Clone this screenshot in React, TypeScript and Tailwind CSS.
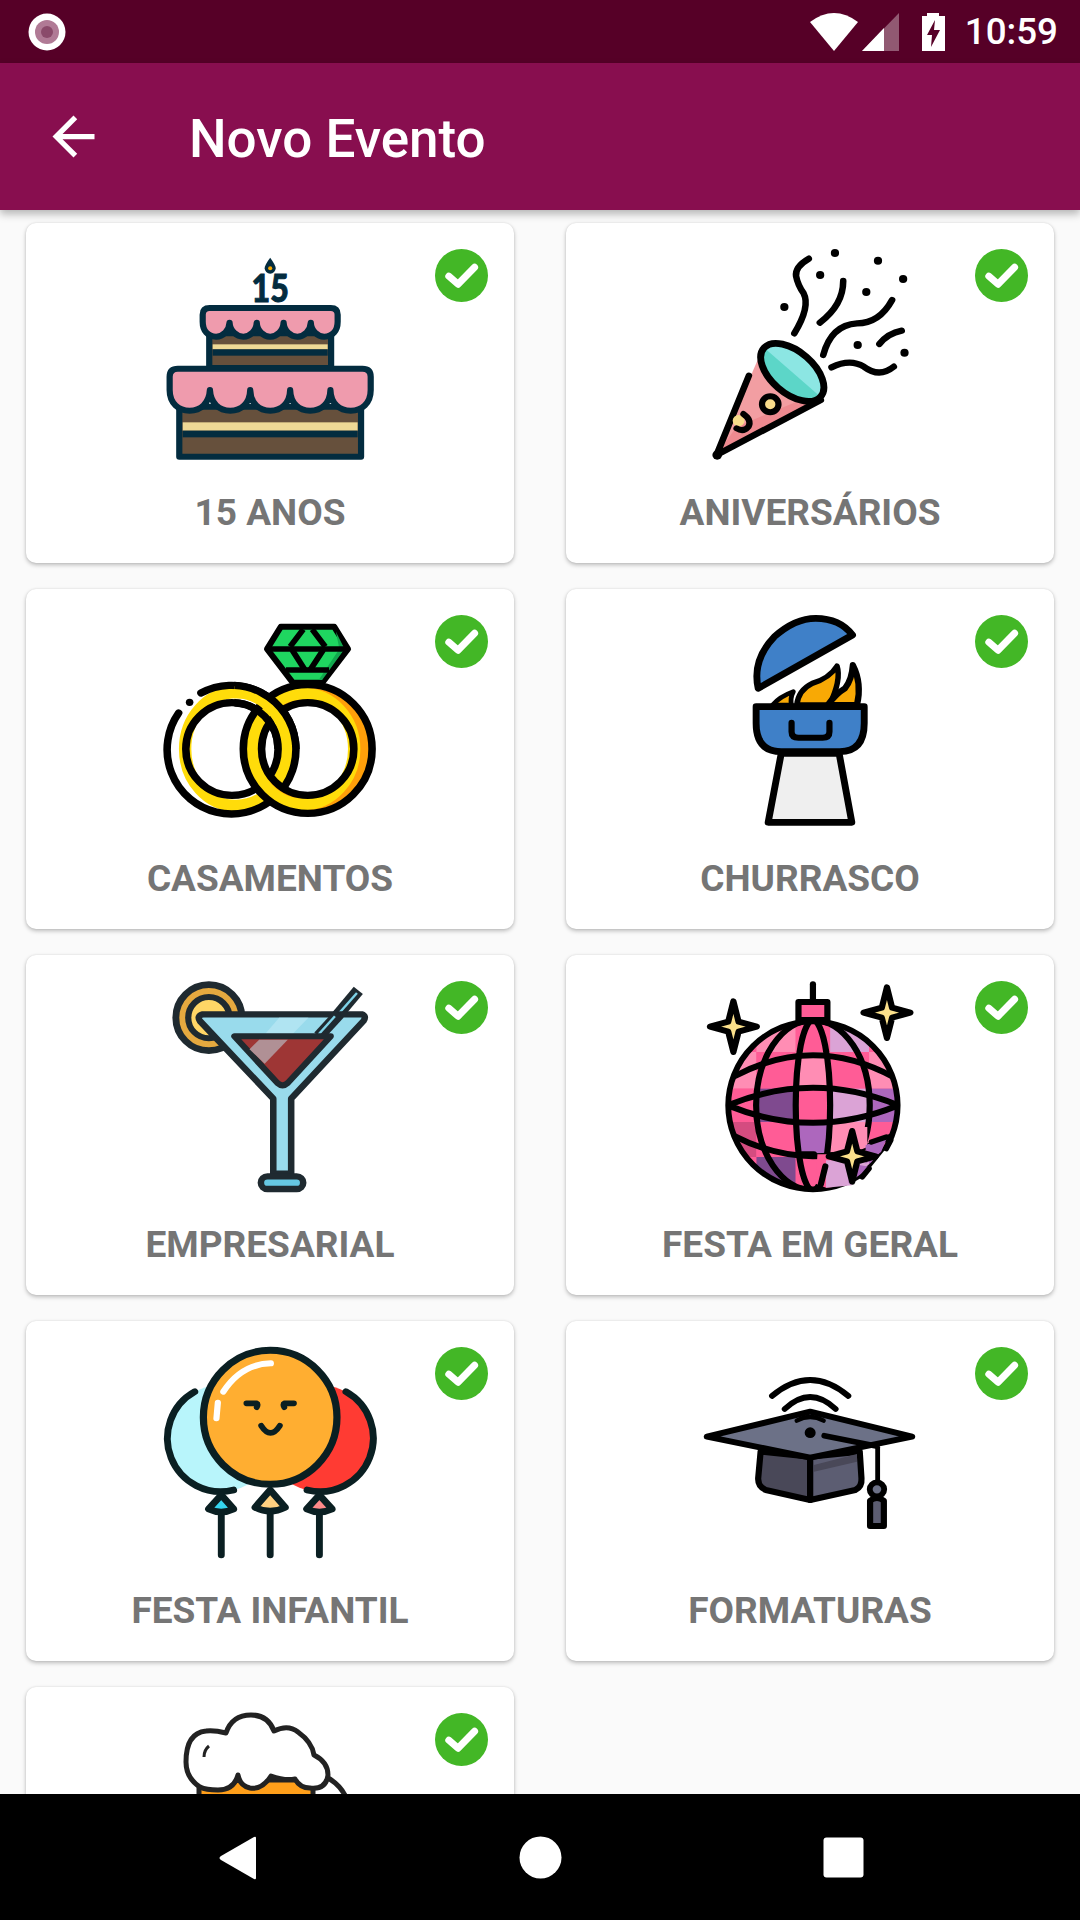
import type { ReactNode } from 'react'

// icon drawings use the coords of the reference crops (2.9 units per px across, 3 down),
// so round things are ellipses with ry a bit over rx
const INK = '#032c3f'

function Cake() {
    return (
        <svg viewBox="464 99 639 660" preserveAspectRatio="none" className="w-[220px] h-[220px]">
            <g stroke={INK} strokeWidth="18" strokeLinejoin="round">
                <rect x="607" y="370" width="354" height="104" fill="#66503c" />
                <rect x="617" y="403" width="334" height="15" fill="#efd996" stroke="none" />
                <rect x="617" y="418" width="334" height="19" fill={INK} stroke="none" />
                <path d="M588 314Q588 294 608 294H960Q980 294 980 314V335C980 362 965 380 941 380C921 380 903 362 902 338C901 362 883 380 863 380C843 380 824 362 823 338C822 362 804 380 784 380C764 380 746 362 745 338C744 362 726 380 706 380C686 380 667 362 666 338C665 362 647 380 627 380C603 380 588 362 588 335Z" fill="#ef9bad" />
                <rect x="520" y="590" width="528" height="150" fill="#66503c" />
                <rect x="530" y="637" width="508" height="25" fill="#efd996" stroke="none" />
                <rect x="530" y="662" width="508" height="20" fill={INK} stroke="none" />
                <path d="M492 500Q492 476 516 476H1052Q1076 476 1076 500V540C1076 580 1050 602 1018 602C985 602 960 580 959 540C958 580 933 602 900 602C868 602 843 580 842 540C841 580 816 602 784 602C752 602 727 580 726 540C725 580 700 602 668 602C636 602 611 580 609 540C607 580 582 602 550 602C518 602 492 580 492 540Z" fill="#ef9bad" />
            </g>
            <text x="784" y="276" textAnchor="middle" fontFamily="Lato" fontWeight="900" fontSize="112" fill={INK} stroke={INK} strokeWidth="3" textLength="108" lengthAdjust="spacingAndGlyphs">15</text>
            <path d="M784 143Q768 165 768 175A16 16 0 0 0 800 175Q800 165 784 143Z" fill={INK} />
            <circle cx="784" cy="175" r="6" fill="#f5a800" />
        </svg>
    )
}

function Popper() {
    const dots = [[856, 129], [981, 152], [1054, 207], [813, 195], [947, 246], [709, 291], [922, 405], [1058, 428]]
    return (
        <svg viewBox="464 99 639 660" preserveAspectRatio="none" className="w-[220px] h-[220px]">
            <path d="M512 735L640 430L815 570Z" fill="#f29ea2" />
            <path d="M512 735L570 650L780 560L815 570Z" fill="#ee8a90" />
            <g transform="rotate(42 732 487)">
                <ellipse cx="732" cy="487" rx="110" ry="62" fill="#8ce6e3" />
                <path d="M622 487A110 62 0 0 0 842 487Z" fill="#5cd6c8" />
                <ellipse cx="732" cy="487" rx="110" ry="62" fill="none" stroke="#000" strokeWidth="20" />
            </g>
            <g fill="none" stroke="#000" strokeWidth="19" strokeLinecap="round" strokeLinejoin="round">
                <path d="M606 497L512 735L815 570" />
                <path d="M780 146Q740 170 743 198Q748 225 765 250Q785 290 738 370" />
                <path d="M880 213Q880 285 812 338" />
                <path d="M822 435Q845 345 920 340Q985 340 1022 270" />
                <path d="M985 402Q1010 370 1050 362" />
                <path d="M846 472Q900 445 940 470Q985 505 1027 470" />
            </g>
            <circle cx="514" cy="735" r="14" fill="#000" />
            <circle cx="668" cy="583" r="24" fill="#f8dc8a" stroke="#000" strokeWidth="18" />
            <circle cx="576" cy="632" r="17" fill="#f8dc8a" />
            <path d="M590 612Q615 630 605 650Q590 668 570 655" fill="none" stroke="#000" strokeWidth="18" strokeLinecap="round" />
            {dots.map(([x, y]) => <circle key={x} cx={x} cy={y} r="12" fill="#000" />)}
        </svg>
    )
}

function Rings() {
    const leftRing = (
        <g fill="none">
            <ellipse cx="685" cy="477" rx="148" ry="170" stroke="#ffdc0a" strokeWidth="36" />
            <ellipse cx="673" cy="477" rx="134" ry="139" stroke="#000" strokeWidth="22" />
            <path d="M583 309A187 193 0 1 1 518 369" stroke="#000" strokeWidth="22" strokeLinecap="round" />
        </g>
    )
    return (
        <svg viewBox="464 57 639 660" preserveAspectRatio="none" className="w-[220px] h-[220px]">
            <defs>
                <clipPath id="rings-top"><rect x="680" y="200" width="240" height="277" /></clipPath>
            </defs>
            {/* gem */}
            <path d="M815 110H970L1010 177L935 278H850L775 177Z" fill="#1fd660" stroke="#000" strokeWidth="18" strokeLinejoin="round" />
            <path d="M975 125L1000 177L935 270L925 270L985 177Z" fill="#12a84e" />
            <g fill="none" stroke="#000" strokeWidth="17" strokeLinejoin="round">
                <path d="M775 177H1010M830 240H955" />
                <path d="M880 118L842 170M906 118L944 170" />
                <path d="M848 180L885 240M938 180L900 240" />
            </g>
            {leftRing}
            <g fill="none">
                <ellipse cx="893" cy="477" rx="161" ry="166" stroke="#ff9f0a" strokeWidth="36" />
                <ellipse cx="880" cy="477" rx="148" ry="166" stroke="#ffdc0a" strokeWidth="36" />
                <ellipse cx="893" cy="477" rx="134" ry="139" stroke="#000" strokeWidth="22" />
                <ellipse cx="893" cy="477" rx="187" ry="193" stroke="#000" strokeWidth="22" />
            </g>
            <g clipPath="url(#rings-top)">{leftRing}</g>
            <circle cx="550" cy="337" r="11" fill="#000" />
        </svg>
    )
}

function Grill() {
    return (
        <svg viewBox="464 57 639 660" preserveAspectRatio="none" className="w-[220px] h-[220px]">
            <g stroke="#000" strokeWidth="20" strokeLinejoin="round">
                <path d="M633 295Q615 210 680 140Q740 85 800 85Q870 85 907 135Z" fill="#3f80c8" />
                <path d="M675 345Q695 320 735 305Q725 325 730 345Z" fill="#f8a905" strokeWidth="14" />
                <path d="M745 345Q750 300 790 280Q840 265 862 228Q875 270 840 345Z" fill="#f8a905" strokeWidth="16" />
                <path d="M835 345Q860 310 885 295Q905 270 908 225Q935 280 920 345Z" fill="#f8a905" strokeWidth="18" />
                <path d="M700 490L662 697H905L868 490Z" fill="#efefef" />
                <path d="M627 350H941V400Q941 485 870 485H700Q627 485 627 400Z" fill="#3f80c8" />
                <path d="M730 398V425Q730 443 750 443H820Q840 443 840 425V398" fill="none" strokeWidth="18" strokeLinecap="round" />
            </g>
        </svg>
    )
}

function Cocktail() {
    const line = '#1f2a30'
    return (
        <svg viewBox="464 74 639 660" preserveAspectRatio="none" className="w-[220px] h-[220px]">
            <ellipse cx="606" cy="202" rx="96" ry="99" fill="#e5a93f" stroke={line} strokeWidth="20" />
            <ellipse cx="606" cy="202" rx="60" ry="62" fill="#ffd666" stroke={line} strokeWidth="18" />
            <path d="M925 262L1040 120" stroke={line} strokeWidth="34" />
            <path d="M925 258L1036 128" stroke="#7fd3e8" strokeWidth="7" />
            <path d="M588 192H1050Q1065 197 1055 212L845 445V670H793V445L580 212Q570 197 588 192Z" fill="#99dbec" stroke={line} strokeWidth="19" strokeLinejoin="round" />
            <path d="M810 202H895L850 250H770Z" fill="#b0e4f2" />
            <path d="M925 258L985 190" stroke={line} strokeWidth="34" />
            <path d="M925 252L972 198" stroke="#7fd3e8" strokeWidth="7" />
            <path d="M680 258H960L835 398Q820 412 805 398Z" fill="#9e3635" stroke={line} strokeWidth="18" strokeLinejoin="round" />
            <path d="M752 268H835L768 340L724 297Z" fill="#b09095" />
            <rect x="757" y="678" width="123" height="38" rx="19" fill="#66c8e3" stroke={line} strokeWidth="19" />
        </svg>
    )
}

const P = '#ff5c96'
const L = '#ff8db4'
const V = '#dba3d6'
const D = '#7f4a8f'
const M = '#ad67bd'
const DISCO_CELLS = [
    [P, L, P, V, P],
    [L, P, L, P, L],
    [P, D, P, V, M],
    ['#d44c80', P, M, L, P],
    [P, D, P, V, M],
]
const DISCO_X = [530, 628, 742, 842, 955, 1060]
const DISCO_Y = [200, 305, 415, 515, 620, 730]

function star(cx: number, cy: number) {
    const w = 15
    return `M${cx} ${cy - 76}L${cx + w} ${cy - w}L${cx + 68} ${cy}L${cx + w} ${cy + w}L${cx} ${cy + 76}L${cx - w} ${cy + w}L${cx - 68} ${cy}L${cx - w} ${cy - w}Z`
}

function Disco() {
    return (
        <svg viewBox="464 74 639 660" preserveAspectRatio="none" className="w-[220px] h-[220px]">
            <defs>
                <clipPath id="disco-ball"><ellipse cx="792" cy="465" rx="246" ry="252" /></clipPath>
            </defs>
            <path d="M792 102V150" stroke="#000" strokeWidth="18" strokeLinecap="round" />
            <rect x="750" y="155" width="84" height="54" fill={P} stroke="#000" strokeWidth="18" strokeLinejoin="round" />
            <ellipse cx="792" cy="465" rx="246" ry="252" fill={P} />
            <g clipPath="url(#disco-ball)">
                {DISCO_CELLS.map((row, r) => row.map((c, i) => (
                    <rect key={`${r}-${i}`} x={DISCO_X[i]} y={DISCO_Y[r]} width={DISCO_X[i + 1] - DISCO_X[i]} height={DISCO_Y[r + 1] - DISCO_Y[r]} fill={c} />
                )))}
                <g fill="none" stroke="#000" strokeWidth="18">
                    <ellipse cx="792" cy="465" rx="50" ry="255" />
                    <ellipse cx="792" cy="465" rx="165" ry="255" />
                    <path d="M545 465Q792 360 1040 465Q792 570 545 465Z" />
                    <path d="M560 380Q792 250 1025 380" />
                    <path d="M560 555Q792 680 1025 555" />
                </g>
            </g>
            <ellipse cx="792" cy="465" rx="246" ry="252" fill="none" stroke="#000" strokeWidth="17" />
            {/* the lower star cuts the grid and the ball outline */}
            <path d="M1012 585L1060 600L1000 740L925 725L945 670Z" fill="#fff" />
            <path d="M850 530H950V590L880 620H850Z" fill={L} />
            <path d="M945 585L1010 555L990 605L945 640Z" fill={M} />
            <path d="M805 612H850V710L830 712L800 700Z" fill={P} />
            <path d="M830 630H905V705L830 712Z" fill={V} />
            <path d="M905 640L960 650L895 698Z" fill={M} />
            <path d="M962 575L1005 560M935 680L955 655M1005 595L1018 570" stroke="#000" strokeWidth="16" strokeLinecap="round" />
            <path d="M760 612H795M828 648L815 702" fill="none" stroke="#000" strokeWidth="18" strokeLinecap="round" />
            {[[561, 229], [1007, 187], [906, 618]].map(([x, y]) => (
                <path key={x} d={star(x, y)} fill="#fbe08b" stroke="#000" strokeWidth="18" strokeLinejoin="round" />
            ))}
        </svg>
    )
}

function Balloons() {
    const line = '#0a1f22'
    return (
        <svg viewBox="464 93 639 660" preserveAspectRatio="none" className="w-[220px] h-[220px]">
            <ellipse cx="642" cy="385" rx="155" ry="160" fill="#b8f5fb" />
            <ellipse cx="927" cy="385" rx="155" ry="160" fill="#ff3b33" />
            <g fill="none" stroke={line} strokeWidth="20" strokeLinecap="round" strokeLinejoin="round">
                <path d="M565 245A155 160 0 0 0 678 540" />
                <path d="M1004 245A155 160 0 0 1 891 540" />
                <ellipse cx="784" cy="322" rx="194" ry="201" fill="#ffae31" strokeWidth="21" />
                <path d="M642 612V735M784 612V735M927 612V735" />
                <path d="M642 555L605 597Q642 615 678 597Z" fill="#35d6f0" />
                <path d="M784 540L740 592Q784 615 828 592Z" fill="#ffd180" />
                <path d="M927 555L890 597Q927 615 964 597Z" fill="#ff8a8a" />
                <path d="M715 280H745Q750 282 745 292M853 280H825Q820 282 825 292" strokeWidth="17" />
                <path d="M758 347Q785 390 812 347" strokeWidth="17" />
            </g>
            <path d="M786 160Q700 162 648 245M632 278L628 325" fill="none" stroke="#fff" strokeWidth="18" strokeLinecap="round" />
        </svg>
    )
}

function GradCap() {
    return (
        <svg viewBox="464 93 639 660" preserveAspectRatio="none" className="w-[220px] h-[220px]">
            <g stroke="#000" strokeWidth="18" strokeLinejoin="round" strokeLinecap="round">
                <path d="M640 425L633 505Q632 530 655 540L784 570V440Z" fill="#494858" />
                <path d="M928 425L933 505Q935 530 915 540L784 570V440Z" fill="#5c5d72" />
                <path d="M795 465L920 432V455L795 485Z" fill="#494858" stroke="none" />
                <path d="M784 305L1080 380L784 443L484 380Z" fill="#6c7187" />
                <path d="M673 258Q784 162 895 258M710 297Q784 225 858 297" fill="none" strokeWidth="17" />
                <path d="M745 332Q784 310 823 332" fill="none" strokeWidth="13" />
                <path d="M825 377L975 408" fill="none" strokeWidth="17" />
                <path d="M980 412V510" fill="none" strokeWidth="14" />
                <path d="M958 572Q978 555 998 572V648H958Z" fill="#5c5d72" />
                <circle cx="978" cy="538" r="21" fill="#6c7187" strokeWidth="17" />
            </g>
            <circle cx="784" cy="368" r="16" fill="#000" />
        </svg>
    )
}

// this one is cut off by the nav bar, drawn in real px
function Beer() {
    return (
        <svg viewBox="160 1707 220 220" className="w-[220px] h-[220px]">
            <rect x="199" y="1780" width="114" height="60" fill="#ff9f1a" stroke="#222" strokeWidth="5" />
            <path d="M314 1772Q340 1780 347 1800" fill="none" stroke="#222" strokeWidth="5" />
            <path d="M200 1787Q186 1778 186 1762Q186 1733 206 1731Q214 1730 226 1733Q232 1715 251 1715Q268 1715 274 1731Q288 1724 298 1732Q312 1742 314 1755Q328 1762 328 1775Q326 1790 310 1788Q300 1788 295 1779Q285 1781 271 1776Q262 1790 250 1788Q240 1786 238 1775Q234 1790 218 1790Q206 1790 200 1787Z" fill="#fff" stroke="#222" strokeWidth="5" strokeLinejoin="round" />
            <path d="M204 1757Q204 1750 209 1746" fill="none" stroke="#222" strokeWidth="3" />
        </svg>
    )
}

const EVENTS: { label?: string; icon: ReactNode }[] = [
    { label: '15 ANOS', icon: <Cake /> },
    { label: 'ANIVERSÁRIOS', icon: <Popper /> },
    { label: 'CASAMENTOS', icon: <Rings /> },
    { label: 'CHURRASCO', icon: <Grill /> },
    { label: 'EMPRESARIAL', icon: <Cocktail /> },
    { label: 'FESTA EM GERAL', icon: <Disco /> },
    { label: 'FESTA INFANTIL', icon: <Balloons /> },
    { label: 'FORMATURAS', icon: <GradCap /> },
    { icon: <Beer /> },
]

function CheckBadge() {
    return (
        <svg viewBox="0 0 53 53" className="absolute top-[26px] right-[26px] w-[53px] h-[53px]">
            <circle cx="26.5" cy="26.5" r="26.5" fill="#43b726" />
            <path d="M13.8 27.2L23 35.2L39.6 18.2" fill="none" stroke="#fff" strokeWidth="7" strokeLinecap="round" strokeLinejoin="round" />
        </svg>
    )
}

export default function App() {
    return (
        <div className="w-[1080px] h-[1920px] flex flex-col bg-[#fafafa] font-['Roboto',sans-serif] overflow-hidden">
            {/* Status bar */}
            <div className="h-[63px] shrink-0 bg-[#560027] flex items-center justify-between pl-[28px] pr-[22px]">
                <svg viewBox="0 0 38 38" className="w-[38px] h-[38px]">
                    <circle cx="19" cy="19" r="18.5" fill="#fff" />
                    <circle cx="19" cy="19" r="12" fill="#b07a95" />
                    <circle cx="19" cy="19" r="6" fill="#8a4a6a" />
                </svg>
                <div className="flex items-center">
                    <svg viewBox="0 0 48 38" className="w-[48px] h-[38px]">
                        <path d="M0 9Q24 -9 48 9L24 38Z" fill="#fff" />
                    </svg>
                    <svg viewBox="0 0 37 38" className="w-[37px] h-[38px] ml-[4px]">
                        <path d="M37 0V38H0Z" fill="#fff" fillOpacity="0.35" />
                        <path d="M22 15V38H0Z" fill="#fff" />
                    </svg>
                    <svg viewBox="0 0 23 38" className="w-[23px] h-[38px] ml-[23px]">
                        <path d="M5 0H17V3H23V38H0V3H5Z" fill="#fff" />
                        <path d="M13 7L5 22H10L9 34L18 17H12Z" fill="#560027" />
                    </svg>
                    <span className="ml-[20px] mt-[2px] text-white text-[36.75px] leading-none font-medium">10:59</span>
                </div>
            </div>

            {/* App bar */}
            <div className="h-[147px] shrink-0 relative z-10 bg-[#880e4f] flex items-center pl-[42px] shadow-[0_4px_8px_rgba(0,0,0,0.28)]">
                <svg viewBox="0 0 24 24" className="w-[63px] h-[63px]" fill="#fff">
                    <path d="M20 11H7.83l5.59-5.59L12 4l-8 8 8 8 1.41-1.41L7.83 13H20v-2z" />
                </svg>
                <h1 className="ml-[84px] mt-[5px] text-white text-[53px] leading-none font-medium">Novo Evento</h1>
            </div>

            {/* Event grid */}
            <div className="flex-1 overflow-hidden px-[26px] pt-[13px]">
                <div className="grid grid-cols-2 gap-x-[52px] gap-y-[26px]">
                    {EVENTS.map((event, i) => (
                        <div key={i} className="relative h-[340px] bg-white rounded-[10px] flex flex-col items-center pt-[20px] shadow-[0_2px_4px_rgba(0,0,0,0.25),0_0_2px_rgba(0,0,0,0.1)]">
                            {event.icon}
                            <CheckBadge />
                            {event.label && <span className="mt-[28px] text-[37px] leading-[43px] font-bold text-[#757575]">{event.label}</span>}
                        </div>
                    ))}
                </div>
            </div>

            {/* Nav bar */}
            <div className="h-[126px] shrink-0 bg-black flex items-center justify-center gap-[240px]">
                <svg viewBox="0 0 63 63" className="w-[63px] h-[63px]">
                    <path d="M50 12V52Q50 54 48 53L15 34Q12 32 15 30L48 11Q50 10 50 12Z" fill="#fff" />
                </svg>
                <svg viewBox="0 0 63 63" className="w-[63px] h-[63px]">
                    <circle cx="31.5" cy="31.5" r="21" fill="#fff" />
                </svg>
                <svg viewBox="0 0 63 63" className="w-[63px] h-[63px]">
                    <rect x="11.5" y="11.5" width="40" height="40" rx="3" fill="#fff" />
                </svg>
            </div>
        </div>
    )
}
